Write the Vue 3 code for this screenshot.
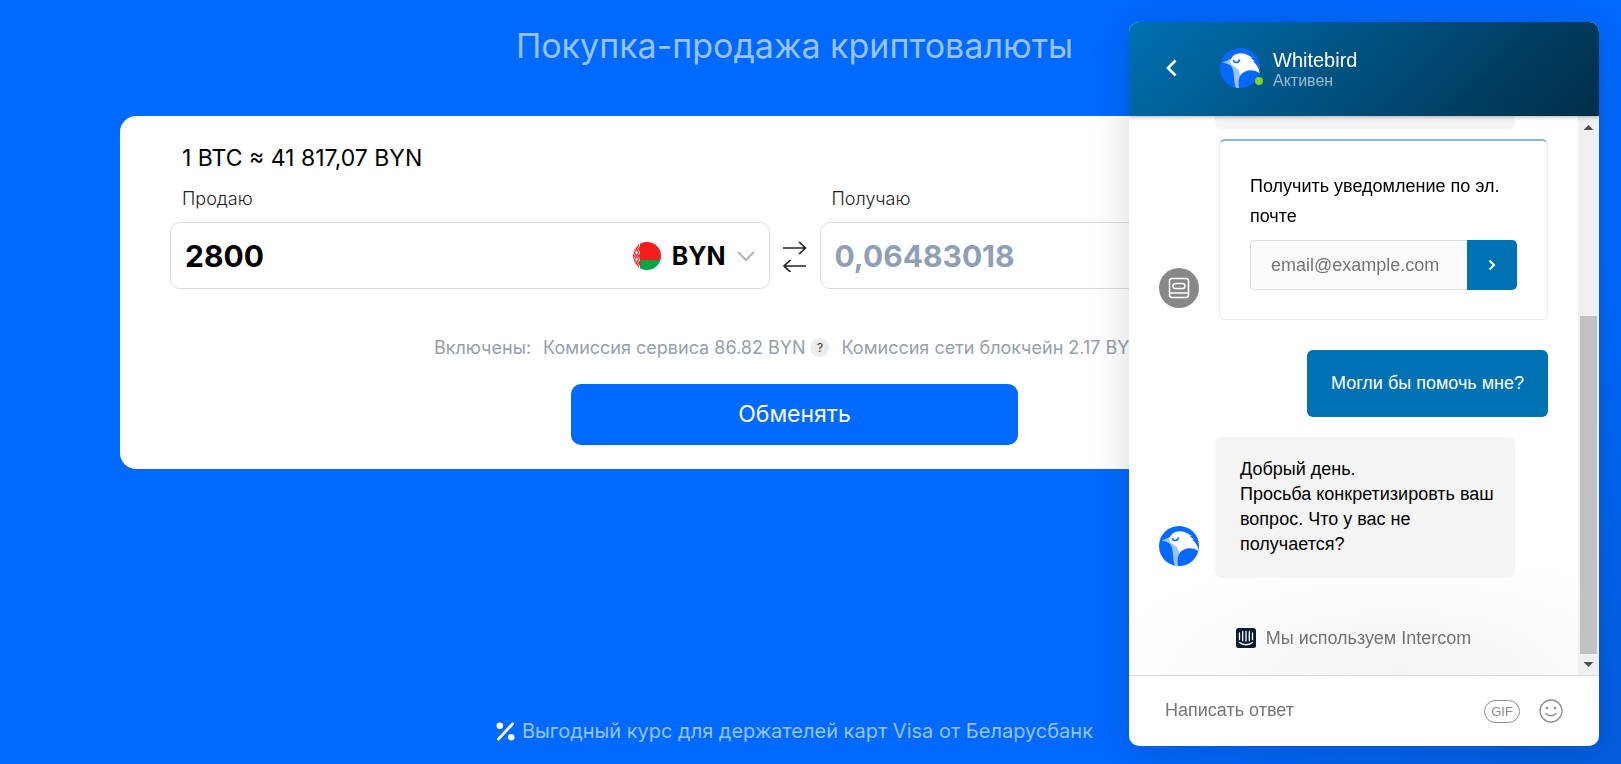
<template>
  <div class="page">
    <main class="exchange">
      <h1 class="title">Покупка-продажа криптовалюты</h1>

      <form class="card" @submit.prevent>
        <p class="rate">1 BTC ≈ 41 817,07 BYN</p>

        <div class="fields">
          <div class="field">
            <label for="sell">Продаю</label>
            <div class="box">
              <input id="sell" v-model="sell" type="text" inputmode="decimal">
              <button type="button" class="currency">
                <svg class="flag" viewBox="0 0 28 28" aria-hidden="true">
                  <clipPath id="flag-clip"><circle cx="14" cy="14" r="14" /></clipPath>
                  <g clip-path="url(#flag-clip)">
                    <rect width="28" height="18" fill="#f21d1d" />
                    <rect y="18" width="28" height="10" fill="#05a547" />
                    <rect width="7" height="28" fill="#fff" />
                    <path d="M3.500 1l2 3-2 3-2-3zM3.500 7l2 3.500-2 3.500-2-3.500zM3.500 14l2 3.500-2 3.500-2-3.500zM3.500 21l2 3-2 3-2-3zM0 5l1.500 2L0 9zM7 5L5.500 7 7 9zM0 12l1.500 2L0 16zM7 12l-1.500 2L7 16zM0 19l1.500 2L0 23zM7 19l-1.500 2L7 23z" fill="none" stroke="#f21d1d" stroke-width="1.200" />
                  </g>
                </svg>
                <span>BYN</span>
                <svg class="caret" viewBox="0 0 18 12" aria-hidden="true">
                  <path d="M1 2l8 8 8-8" fill="none" stroke="#b4b4b4" stroke-width="2" />
                </svg>
              </button>
            </div>
          </div>

          <button type="button" class="swap" aria-label="Поменять местами">
            <svg viewBox="0 0 24 32" aria-hidden="true">
              <g fill="none" stroke="#222" stroke-width="1.700">
                <path d="M0 8h22.500M16 2l6.500 6-6.500 6" />
                <path d="M23 26H1M7.500 20L1 26l6.500 6" />
              </g>
            </svg>
          </button>

          <div class="field">
            <label for="buy">Получаю</label>
            <div class="box">
              <input id="buy" v-model="buy" class="muted" type="text" inputmode="decimal">
            </div>
          </div>
        </div>

        <div class="fees">
          <span>Включены:</span>
          <span class="fee">
            Комиссия сервиса 86.82 BYN
            <button type="button" class="hint">?</button>
          </span>
          <span>Комиссия сети блокчейн 2.17 BYN</span>
        </div>

        <button type="submit" class="submit">Обменять</button>
      </form>

      <p class="promo">
        <svg viewBox="0 0 20 20" aria-hidden="true">
          <path d="M2.500 18L17.500 2" stroke="#fff" stroke-width="3" stroke-linecap="round" />
          <circle cx="4" cy="4" r="3.500" fill="#fff" />
          <circle cx="16" cy="16" r="3.500" fill="#fff" />
        </svg>
        <span>Выгодный курс для держателей карт Visa от Беларусбанк</span>
      </p>
    </main>

    <section class="chat" aria-label="Чат">
      <header class="chat-header">
        <button type="button" class="back" aria-label="Назад">
          <svg viewBox="0 0 12 18" aria-hidden="true">
            <path d="M10.500 1.500L3 9l7.500 7.500" fill="none" stroke="#fff" stroke-width="2.700" />
          </svg>
        </button>
        <div class="avatar">
          <svg viewBox="0 0 40 40" aria-hidden="true"><use href="#bird" /></svg>
          <i class="online"></i>
        </div>
        <div class="who">
          <strong>Whitebird</strong>
          <span>Активен</span>
        </div>
      </header>

      <div class="chat-body">
        <div class="messages">
          <div class="bubble previous"></div>

          <div class="row">
            <div class="avatar article">
              <svg viewBox="0 0 40 40" aria-hidden="true">
                <g fill="none" stroke="#fff" stroke-width="1.500">
                  <rect x="10.500" y="10.500" width="19" height="19" rx="2.500" />
                  <rect x="14" y="15.500" width="12" height="5" rx="2.500" />
                  <path d="M10.500 25h19" />
                </g>
              </svg>
            </div>
            <form class="notify" @submit.prevent>
              <label for="email">Получить уведомление по эл. почте</label>
              <div class="email">
                <input id="email" v-model="email" type="email" placeholder="email@example.com">
                <button type="submit" aria-label="Отправить">
                  <svg viewBox="0 0 8 12" aria-hidden="true">
                    <path d="M1.500 1.500L6 6l-4.500 4.500" fill="none" stroke="#fff" stroke-width="2" />
                  </svg>
                </button>
              </div>
            </form>
          </div>

          <div class="bubble own">Могли бы помочь мне?</div>

          <div class="row reply">
            <div class="avatar">
              <svg viewBox="0 0 40 40" aria-hidden="true"><use href="#bird" /></svg>
            </div>
            <div class="bubble">Добрый день.<br>Просьба конкретизировть ваш вопрос. Что у вас не получается?</div>
          </div>

          <a class="powered" href="#">
            <svg viewBox="0 0 20 20" aria-hidden="true">
              <rect width="20" height="20" rx="2.500" fill="#081d34" />
              <path d="M3.500 5v6.500M6.700 3.700v9M10 3.300v9.800M13.300 3.700v9M16.500 5v6.500M3.500 14.500c3.500 3 9.500 3 13 0" fill="none" stroke="#fff" stroke-width="1.300" stroke-linecap="round" />
            </svg>
            <span>Мы используем Intercom</span>
          </a>
        </div>

        <div class="scrollbar" aria-hidden="true">
          <i class="arrow up"></i>
          <i class="thumb"></i>
          <i class="arrow down"></i>
        </div>
      </div>

      <footer class="composer">
        <input v-model="message" type="text" placeholder="Написать ответ" aria-label="Написать ответ">
        <button type="button" class="gif">GIF</button>
        <button type="button" class="emoji" aria-label="Эмодзи">
          <svg viewBox="0 0 24 24" aria-hidden="true">
            <circle cx="12" cy="12" r="11" fill="none" stroke="#8c8c8f" stroke-width="1.300" />
            <circle cx="8" cy="9" r="1.300" fill="#8c8c8f" />
            <circle cx="16" cy="9" r="1.300" fill="#8c8c8f" />
            <path d="M7 14.500c2.500 3 7.500 3 10 0" fill="none" stroke="#8c8c8f" stroke-width="1.300" stroke-linecap="round" />
          </svg>
        </button>
      </footer>
    </section>

    <svg class="defs" aria-hidden="true">
      <symbol id="bird" viewBox="0 0 40 40">
        <circle cx="20" cy="20" r="20" fill="#0569ff" />
        <path d="M2.500 14.500C6 13.500 9 11.500 11 11l4 7 6 8.500c-2.500 3.500-3 8-2 13.500-1 0-2 0-3-.3C13.300 34 15 24 11.500 18.500 9 15.800 5.500 15.200 2.500 14.500z" fill="#99c3ff" />
        <path d="M10 13.500C11.500 8 15.500 5.200 20.500 5.200c3 0 5.500.8 8 2.300l4.500 2.500-3-.3c2 1 3.500 2.300 5 4l-2.300-.6C36.500 16 39 20 39.700 25.600c-4-3.600-11-4.300-15.500-1.600-1.800 1-3 2-4 3.500-.5-4.500-4-8.500-8.700-10.500z" fill="#fff" />
        <path d="M13.500 12c.3 3.500 5.500 3.500 6-.7" fill="none" stroke="#0569ff" stroke-width="1.500" />
      </symbol>
    </svg>
  </div>
</template>

<script setup>
import { ref } from 'vue'

const sell = ref('2800')
const buy = ref('0,06483018')
const email = ref('')
const message = ref('')
</script>

<style>
body {
  margin: 0;
  background: #0069ff;
}
</style>

<style scoped>
* {
  box-sizing: border-box;
}

button,
input {
  margin: 0;
  padding: 0;
  border: 0;
  outline: 0;
  background: none;
  font-family: inherit;
}

svg {
  display: block;
}

.page {
  min-height: 100vh;
  background: radial-gradient(ellipse at bottom right, rgba(29, 39, 54, 0.16) 0, rgba(29, 39, 54, 0) 72%) bottom right / 500px 500px no-repeat #0069ff;
  font-family: Inter, sans-serif;
}

.defs {
  position: absolute;
  width: 0;
  height: 0;
}

.exchange {
  display: flex;
  flex-direction: column;
  min-height: 100vh;
  padding: 24px 152px 18px 120px;
}

.title {
  margin: 0 0 48px;
  color: #99c3ff;
  font-size: 34px;
  font-weight: 400;
  line-height: 44px;
  text-align: center;
}

.card {
  display: flex;
  flex-direction: column;
  padding: 24px 50px;
  border-radius: 16px;
  background: #fff;
}

.rate {
  margin: 0 0 11px 12px;
  font-size: 23px;
  line-height: 36px;
}

.fields {
  display: flex;
  align-items: flex-end;
}

.field {
  flex: 1;
  min-width: 0;
}

.field label {
  display: block;
  margin: 0 0 11px 12px;
  color: #222;
  font-size: 18px;
  font-weight: 300;
  line-height: 24px;
}

.box {
  display: flex;
  align-items: center;
  height: 67px;
  padding: 0 14px;
  border: 1px solid #dcdcdc;
  border-radius: 10px;
}

.box input {
  flex: 1;
  min-width: 0;
  color: #000;
  font-size: 30px;
  font-weight: 700;
}

.box .muted {
  color: #8f9fb5;
}

.currency {
  display: flex;
  align-items: center;
  gap: 11px;
  color: #000;
  font-size: 25px;
  font-weight: 700;
}

.flag {
  width: 28px;
  height: 28px;
}

.caret {
  width: 18px;
  height: 12px;
}

.swap {
  display: flex;
  align-items: center;
  justify-content: center;
  width: 50px;
  height: 67px;
}

.swap svg {
  width: 24px;
  height: 32px;
}

.fees {
  display: flex;
  justify-content: center;
  gap: 12px;
  margin: 46px 0 24px;
  padding-right: 12px;
  color: #96a0ad;
  font-size: 18px;
  line-height: 25px;
}

.fee {
  display: flex;
  align-items: center;
  gap: 5px;
}

.hint {
  width: 19px;
  height: 19px;
  border-radius: 50%;
  background: #ececec;
  color: #333;
  font-size: 12px;
}

.submit {
  align-self: center;
  width: 447px;
  height: 61px;
  padding-bottom: 2px;
  border-radius: 10px;
  background: #0069ff;
  color: #fff;
  font-size: 23px;
}

.promo {
  display: flex;
  align-items: center;
  justify-content: center;
  gap: 7px;
  margin: auto 0 0;
  color: #99c3ff;
  font-size: 20px;
  line-height: 30px;
}

.promo svg {
  width: 19px;
  height: 19px;
}

/* Chat widget floats over the page */
.chat {
  position: fixed;
  top: 22px;
  right: 22px;
  bottom: 18px;
  display: flex;
  flex-direction: column;
  width: 470px;
  overflow: hidden;
  border-radius: 10px;
  background: #fff;
  box-shadow: 0 5px 40px rgba(0, 0, 0, 0.16);
  font-family: "Liberation Sans", Arial, sans-serif;
  font-size: 18px;
}

.chat-header {
  position: relative;
  display: flex;
  align-items: center;
  flex: none;
  height: 94px;
  padding: 0 36px 2px;
  background: linear-gradient(135deg, #0071b2 0%, #002d47 100%);
  box-shadow: 0 1px 4px rgba(0, 0, 0, 0.3);
  color: #fff;
}

.back {
  width: 12px;
  margin-right: 43px;
}

.avatar {
  position: relative;
  flex: none;
  width: 40px;
  height: 40px;
}

.online {
  position: absolute;
  right: -3px;
  bottom: 3px;
  width: 8px;
  height: 8px;
  border-radius: 50%;
  background: #7fd321;
}

.who {
  display: flex;
  flex-direction: column;
  margin-left: 13px;
  padding-top: 4px;
}

.who strong {
  font-size: 20px;
  font-weight: 400;
  line-height: 21px;
}

.who span {
  color: rgba(255, 255, 255, 0.6);
  font-size: 16px;
  line-height: 19px;
}

.chat-body {
  display: flex;
  flex: 1;
  min-height: 0;
  border-bottom: 1px solid #dcdcdc;
}

.messages {
  display: flex;
  flex: 1;
  flex-direction: column;
  min-width: 0;
  padding: 0 30px;
  background: radial-gradient(ellipse at 60% 100%, #f4f4f4 0, #fff 80%) bottom / 100% 110px no-repeat;
}

.row {
  display: flex;
  align-items: flex-end;
  gap: 20px;
}

.reply {
  gap: 16px;
}

.bubble {
  width: 300px;
  padding: 20px 20px 21px 25px;
  border-radius: 6px;
  background: #f4f4f4;
  color: #000;
  line-height: 25px;
}

.previous {
  height: 13px;
  margin: 0 0 10px 56px;
  padding: 0;
  border-radius: 0 0 6px 6px;
}

.row .avatar {
  margin-bottom: 12px;
}

.article {
  border-radius: 50%;
  background: #888;
}

.notify {
  flex: 1;
  min-width: 0;
  padding: 30px 30px 29px;
  border: 1px solid #ebebeb;
  border-top: 2px solid #7fb8d9;
  border-radius: 6px;
}

.notify label {
  display: block;
  color: #000;
  line-height: 30px;
}

.email {
  display: flex;
  height: 50px;
  margin-top: 9px;
}

.email input {
  flex: 1;
  min-width: 0;
  padding: 0 20px;
  border: 1px solid #dcdcdc;
  border-right: 0;
  border-radius: 5px 0 0 5px;
  background: #fafafa;
  font-size: 18px;
}

.email button {
  display: flex;
  align-items: center;
  justify-content: center;
  width: 50px;
  border-radius: 0 5px 5px 0;
  background: #0071b2;
}

.email svg {
  width: 8px;
  height: 12px;
}

input::placeholder {
  color: #757575;
  opacity: 1;
}

.own {
  align-self: flex-end;
  width: auto;
  margin: 30px 0 20px;
  padding: 21px 24px;
  background: #0071b2;
  color: #fff;
}

.powered {
  display: flex;
  align-items: center;
  align-self: center;
  gap: 10px;
  margin-top: 50px;
  color: #737376;
  font-size: 18px;
  line-height: 20px;
  text-decoration: none;
}

.powered svg {
  width: 20px;
  height: 20px;
}

.scrollbar {
  display: flex;
  flex-direction: column;
  align-items: center;
  width: 21px;
  padding: 9px 0 8px;
  background: #f0f0f0;
}

.arrow {
  width: 10px;
  height: 5px;
  background: #505050;
}

.up {
  clip-path: polygon(50% 0, 100% 100%, 0 100%);
}

.down {
  clip-path: polygon(0 0, 100% 0, 50% 100%);
}

.thumb {
  width: 17px;
  height: 338px;
  margin: auto 0 8px;
  background: #c1c1c1;
}

.composer {
  display: flex;
  align-items: center;
  flex: none;
  gap: 19px;
  height: 70px;
  padding: 0 36px;
}

.composer input {
  flex: 1;
  min-width: 0;
  padding-bottom: 2px;
  font-size: 18px;
}

.gif {
  width: 36px;
  height: 23px;
  border: 1px solid #8c8c8f;
  border-radius: 12px;
  color: #8c8c8f;
  font-size: 13px;
}

.emoji {
  width: 24px;
}
</style>
